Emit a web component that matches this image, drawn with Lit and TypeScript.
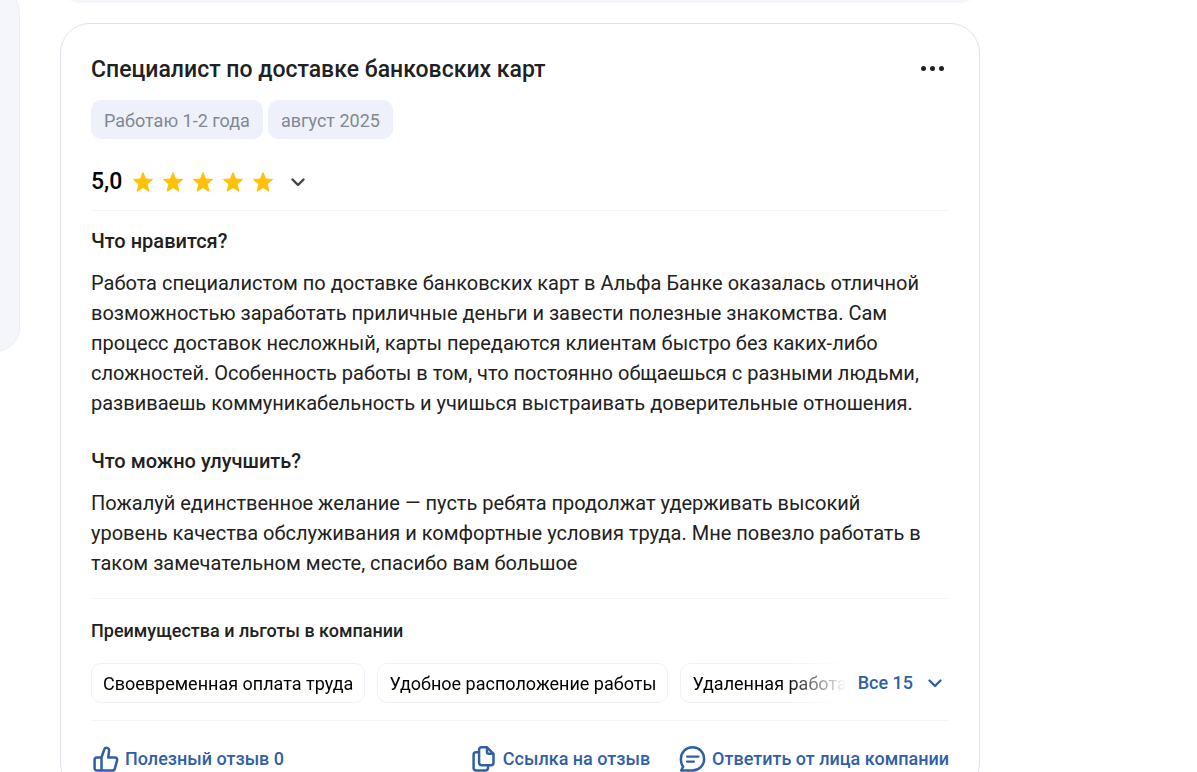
import { LitElement, html, css, svg } from "lit";
import { customElement, property } from "lit/decorators.js";

const chevron = html`<svg class="chevron" viewBox="0 0 16 16" width="16" height="16" aria-hidden="true">
  <path d="M2.5 5.5 8 11l5.500-5.500" fill="none" stroke="currentColor" stroke-width="2.400" stroke-linecap="round" stroke-linejoin="round" />
</svg>`;

const icon = (body: unknown) => html`<svg viewBox="0 0 28 28" width="28" height="28" fill="none" stroke="currentColor"
  stroke-width="2.500" stroke-linecap="round" stroke-linejoin="round" aria-hidden="true">${body}</svg>`;

const thumb = icon(svg`<path d="M10.500 12.500H6a2.400 2.400 0 0 0-2.400 2.400v8.200A2.400 2.400 0 0 0 6 25.500h15.400a2.600 2.600 0 0 0 2.500-2.100l2.200-8a2.300 2.300 0 0 0-2.300-2.900h-6.600l.9-6.800a2.500 2.500 0 0 0-4.800-1.300l-2.800 8.100v13" />`);
const copy = icon(svg`<path d="M12.500 2.300h5.500l6.500 6.500v9a2.400 2.400 0 0 1-2.400 2.400h-9.600a2.400 2.400 0 0 1-2.400-2.400V4.700a2.400 2.400 0 0 1 2.400-2.400Z" /><path d="M18 2.800v4.200a1.800 1.800 0 0 0 1.800 1.800h4.200" /><path d="M9.500 7.200H7a2.400 2.400 0 0 0-2.400 2.400v13.500A2.400 2.400 0 0 0 7 25.500h9.600a2.400 2.400 0 0 0 2.400-2.400v-2.500" />`);
const reply = icon(svg`<path d="M14.500 2.300c6.700 0 11.600 5 11.600 11.600s-4.900 11.600-11.600 11.600H3.200l1.900-3.700C3.600 19.700 2.900 17 2.900 13.900c0-6.600 4.900-11.600 11.600-11.600Z" /><path d="M9 11.600h11.500M9 16.600h7" stroke-width="2.200" />`);

@customElement("star-rating")
class StarRating extends LitElement {
  @property({ type: Number }) value = 5;

  static styles = css`
    :host { display: flex; gap: 8px; color: #ffc107; }
    svg { display: block; }
  `;

  render() {
    return Array.from({ length: this.value }, () => html`
      <svg viewBox="0 0 22 22" width="22" height="22" aria-hidden="true">
        <path fill="currentColor" stroke="currentColor" stroke-width="1" stroke-linejoin="round"
          d="M11 1.600 13.600 8l6.900.5-5.300 4.600 1.700 7.100L11 16.500l-5.900 3.700 1.700-7.100L1.500 8.500 8.400 8Z" />
      </svg>`);
  }
}

@customElement("app-root")
class AppRoot extends LitElement {
  private benefits = ["Своевременная оплата труда", "Удобное расположение работы", "Удаленная работа"];

  static styles = css`
    :host {
      display: block;
      height: 100vh;
      overflow: hidden;
      background: #fff;
      color: #212121;
      font-family: Roboto, "Noto Sans", sans-serif;
    }
    * { box-sizing: border-box; }
    h2, h3, h4, p, ul { margin: 0; padding: 0; }
    svg { display: block; flex: none; }
    button {
      display: flex;
      align-items: center;
      padding: 0;
      border: 0;
      background: none;
      color: inherit;
      font: inherit;
      cursor: pointer;
    }
    .layout {
      display: grid;
      grid-template-columns: 300px minmax(0, 920px);
      align-items: start;
      gap: 40px;
      margin-left: -280px;
    }
    .side {
      height: 364px;
      margin-top: -12px;
      border: 1px solid #eef0f7;
      border-radius: 24px;
      background: #f5f6fc;
    }
    .feed { display: flex; flex-direction: column; gap: 20px; }
    .previous { height: 60px; margin-top: -57px; border-radius: 20px; background: #f5f6fc; }
    .card {
      padding: 30px 30px 20px;
      border: 1px solid #dfe3ec;
      border-radius: 30px;
    }
    .head { display: flex; justify-content: space-between; align-items: start; }
    h2 { font-size: 23px; line-height: 32px; font-weight: 500; }
    .more { gap: 4px; padding: 12px 5px; }
    .more i { width: 5px; height: 5px; border-radius: 50%; background: #212121; }
    .tags { display: flex; gap: 5px; margin-top: 14px; }
    .tag {
      padding: 9px 13px 6px;
      border-radius: 10px;
      background: #eef1f9;
      color: #7f8894;
      font-size: 18px;
      line-height: 24px;
    }
    .rating {
      display: flex;
      align-items: center;
      gap: 10px;
      padding: 27px 0 12px;
      border-bottom: 1px solid #f3f4f9;
      color: #000;
      font-size: 23px;
      line-height: 32px;
      font-weight: 500;
    }
    .rating button { padding: 6px; color: #424242; }
    h3 { margin-top: 15px; font-size: 20px; line-height: 30px; font-weight: 500; }
    p { margin-top: 12px; padding-right: 16px; font-size: 20px; line-height: 30px; }
    p + h3 { margin-top: 28px; }
    .benefits {
      margin-top: 20px;
      padding: 20px 0 17px;
      border: solid #f3f4f9;
      border-width: 1px 0;
    }
    h4 { font-size: 18px; line-height: 24px; font-weight: 500; }
    .row { display: flex; align-items: center; gap: 12px; margin-top: 20px; }
    ul {
      display: flex;
      flex: 1;
      gap: 12px;
      min-width: 0;
      overflow: hidden;
      list-style: none;
      mask-image: linear-gradient(to left, transparent, #000 60px);
    }
    li {
      flex: none;
      padding: 8px 11px 6px;
      border: 1px solid #f0f1f8;
      border-radius: 10px;
      color: #000;
      font-size: 18px;
      line-height: 24px;
    }
    .all { gap: 14px; padding-right: 6px; color: #315fa7; font-size: 18px; line-height: 24px; font-weight: 500; }
    .actions {
      display: flex;
      gap: 28px;
      padding-top: 24px;
      color: #315fa7;
      font-size: 18px;
      line-height: 28px;
      font-weight: 500;
    }
    .actions button { gap: 6px; white-space: nowrap; }
    .actions .useful { margin-right: auto; }
  `;

  render() {
    return html`
      <div class="layout">
        <aside class="side"></aside>
        <main class="feed">
          <div class="previous"></div>
          <article class="card">
            <header class="head">
              <h2>Специалист по доставке банковских карт</h2>
              <button class="more" aria-label="Ещё"><i></i><i></i><i></i></button>
            </header>
            <div class="tags">
              <span class="tag">Работаю 1-2 года</span>
              <span class="tag">август 2025</span>
            </div>
            <div class="rating">
              <span>5,0</span>
              <star-rating .value=${5}></star-rating>
              <button aria-label="Подробнее об оценке">${chevron}</button>
            </div>
            <h3>Что нравится?</h3>
            <p>Работа специалистом по доставке банковских карт в Альфа Банке оказалась отличной возможностью заработать приличные деньги и завести полезные знакомства. Сам процесс доставок несложный, карты передаются клиентам быстро без каких-либо сложностей. Особенность работы в том, что постоянно общаешься с разными людьми, развиваешь коммуникабельность и учишься выстраивать доверительные отношения.</p>
            <h3>Что можно улучшить?</h3>
            <p>Пожалуй единственное желание — пусть ребята продолжат удерживать высокий уровень качества обслуживания и комфортные условия труда. Мне повезло работать в таком замечательном месте, спасибо вам большое</p>
            <section class="benefits">
              <h4>Преимущества и льготы в компании</h4>
              <div class="row">
                <ul>${this.benefits.map((name) => html`<li>${name}</li>`)}</ul>
                <button class="all">Все 15 ${chevron}</button>
              </div>
            </section>
            <footer class="actions">
              <button class="useful">${thumb}Полезный отзыв 0</button>
              <button>${copy}Ссылка на отзыв</button>
              <button>${reply}Ответить от лица компании</button>
            </footer>
          </article>
        </main>
      </div>
    `;
  }
}
